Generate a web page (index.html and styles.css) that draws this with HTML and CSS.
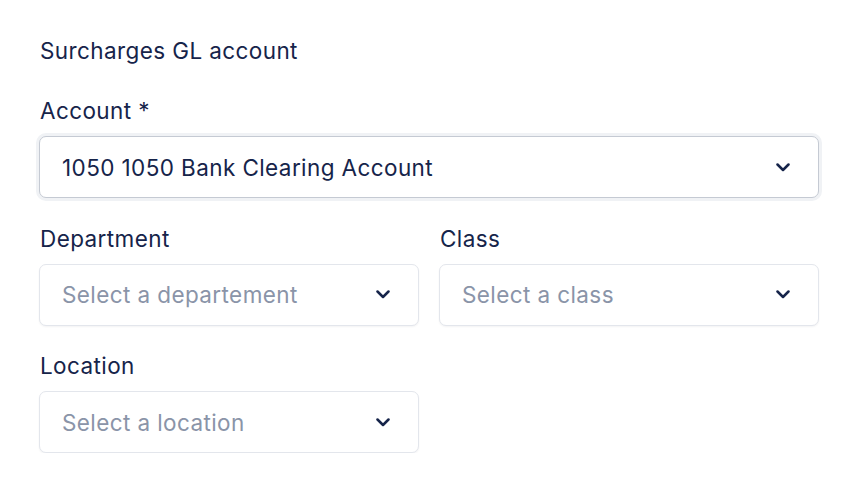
FILE: index.html
```html
<!DOCTYPE html>
<html>
<head>
<meta charset="utf-8">
<link rel="stylesheet" href="styles.css">
</head>
<body>
<div class="panel">
  <h2 class="section-title">Surcharges GL account</h2>
  <div class="field">
    <label class="label">Account *</label>
    <div class="select select-focused">
      <span class="value">1050 1050 Bank Clearing Account</span>
      <svg class="chev" viewBox="0 0 14 9" width="14" height="9"><path d="M1.5 1.5 L7 7 L12.5 1.5" fill="none" stroke="currentColor" stroke-width="2.5" stroke-linecap="round" stroke-linejoin="round"/></svg>
    </div>
  </div>
  <div class="row">
    <div class="field">
      <label class="label">Department</label>
      <div class="select">
        <span class="placeholder">Select a departement</span>
        <svg class="chev" viewBox="0 0 14 9" width="14" height="9"><path d="M1.5 1.5 L7 7 L12.5 1.5" fill="none" stroke="currentColor" stroke-width="2.5" stroke-linecap="round" stroke-linejoin="round"/></svg>
      </div>
    </div>
    <div class="field">
      <label class="label">Class</label>
      <div class="select">
        <span class="placeholder">Select a class</span>
        <svg class="chev" viewBox="0 0 14 9" width="14" height="9"><path d="M1.5 1.5 L7 7 L12.5 1.5" fill="none" stroke="currentColor" stroke-width="2.5" stroke-linecap="round" stroke-linejoin="round"/></svg>
      </div>
    </div>
  </div>
  <div class="row">
    <div class="field">
      <label class="label">Location</label>
      <div class="select">
        <span class="placeholder">Select a location</span>
        <svg class="chev" viewBox="0 0 14 9" width="14" height="9"><path d="M1.5 1.5 L7 7 L12.5 1.5" fill="none" stroke="currentColor" stroke-width="2.5" stroke-linecap="round" stroke-linejoin="round"/></svg>
      </div>
    </div>
    <div></div>
  </div>
</div>
</body>
</html>
```
FILE: styles.css
```css
html, body {
  margin: 0;
  padding: 0;
  background: #ffffff;
}
body {
  font-family: Inter, "Noto Sans", sans-serif;
  color: #16244a;
  letter-spacing: 0.4px;
}
.panel {
  width: 780px;
  padding: 36px 41px 0 39px;
  display: flex;
  flex-direction: column;
  gap: 25.5px;
}
.section-title {
  margin: 0 0 4.5px 1px;
  font-size: 22.5px;
  line-height: 30px;
  font-weight: 400;
  color: #16244a;
}
.field {
  display: flex;
  flex-direction: column;
  gap: 10px;
}
.label {
  font-size: 22.5px;
  line-height: 30px;
  color: #16244a;
  padding-left: 1px;
}
.row {
  display: grid;
  grid-template-columns: 1fr 1fr;
  gap: 20px;
}
.select {
  box-sizing: border-box;
  height: 62px;
  border: 1px solid #e3e6ec;
  border-radius: 7px;
  background: #fff;
  display: flex;
  align-items: center;
  justify-content: space-between;
  padding: 0 28px 0 22px;
  box-shadow: 0 1px 2px rgba(16, 24, 40, 0.05);
  font-size: 22.5px;
}
.select-focused {
  border-color: #c5cad3;
  box-shadow: 0 0 0 3px #f0f2f5;
}
.value {
  color: #16244a;
}
.placeholder {
  color: #8a94a8;
}
.chev {
  color: #16244a;
  flex: none;
}
```
